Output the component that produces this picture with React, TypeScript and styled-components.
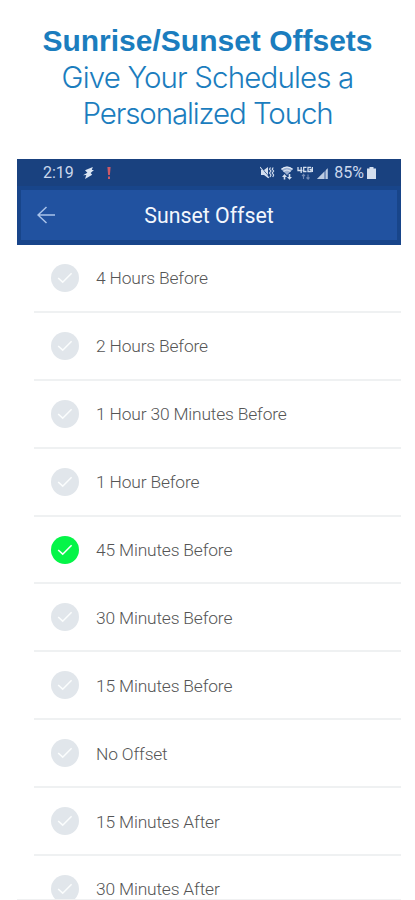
import React from "react";
import styled, { createGlobalStyle } from "styled-components";

const GlobalStyle = createGlobalStyle`
  * { box-sizing: border-box; }
  html, body { margin: 0; background: #fff; }
  body { overflow: hidden; }
`;

const Page = styled.main`
  width: 415px;
  height: 900px;
  overflow: hidden;
  display: flex;
  flex-direction: column;
  background: #fff;
  font-family: Roboto, sans-serif;
`;

const Headline = styled.header`
  height: 159px;
  flex: none;
  padding-top: 23px;
  color: #1b7dbe;
  text-align: center;
`;

const HeadLine = styled.div<{ $bold?: boolean; $track: number }>`
  height: 36px;
  line-height: 36px;
  white-space: nowrap;
  font-family: ${(p) => (p.$bold ? '"Liberation Sans", sans-serif' : "Inter, sans-serif")};
  font-size: ${(p) => (p.$bold ? 30 : 29.5)}px;
  font-weight: ${(p) => (p.$bold ? 700 : 300)};
  letter-spacing: ${(p) => p.$track}px;
`;

const Phone = styled.section`
  width: 384px;
  height: 741px;
  flex: none;
  margin-left: 17px;
  overflow: hidden;
  border-bottom: 1px solid #f0f1f2;
`;

const StatusBar = styled.div`
  height: 27px;
  display: flex;
  align-items: center;
  padding: 0 25px 0 26px;
  background: #19417f;
  color: #cbd8ec;
  font-size: 16px;
`;

const StatusText = styled.span<{ $gap?: number }>`
  margin-left: ${(p) => p.$gap ?? 0}px;
  white-space: nowrap;
`;

const StatusIcons = styled.div`
  display: flex;
  align-items: center;
  margin-left: auto;
`;

const Glyph = styled.svg<{ $gap?: number }>`
  display: block;
  flex: none;
  margin-left: ${(p) => p.$gap ?? 0}px;
`;

const TitleBar = styled.div`
  height: 59px;
  display: grid;
  grid-template-columns: 60px 1fr 60px;
  align-items: center;
  background: #2152a0;
  border: solid #18458a;
  border-width: 4px 4px 5px 4px;
  color: #f3f7fd;
`;

const Title = styled.h1`
  margin: 0;
  padding-top: 2px;
  text-align: center;
  font-size: 21.3px;
  font-weight: 400;
  line-height: 28px;
`;

const OptionList = styled.ul`
  list-style: none;
  margin: 0;
  padding: 0 0 0 17px;
`;

const Option = styled.li`
  height: 67.9px;
  display: flex;
  align-items: center;
  gap: 17px;
  padding-left: 17px;
  border-bottom: 2px solid #eff1f2;
  color: #555;
  font-size: 17.4px;
  font-weight: 300;
  letter-spacing: -0.17px;
`;

const Check = styled.span<{ $on: boolean }>`
  width: 28px;
  height: 28px;
  flex: none;
  display: grid;
  place-items: center;
  border-radius: 50%;
  background: ${(p) => (p.$on ? "#05f548" : "#e1e6eb")};
`;

const Label = styled.span`
  padding-top: 1px;
  white-space: nowrap;
`;

const options = [
  "4 Hours Before",
  "2 Hours Before",
  "1 Hour 30 Minutes Before",
  "1 Hour Before",
  "45 Minutes Before",
  "30 Minutes Before",
  "15 Minutes Before",
  "No Offset",
  "15 Minutes After",
  "30 Minutes After",
];

const selected = "45 Minutes Before";

export default function App() {
  return (
    <Page>
      <GlobalStyle />
      <Headline>
        <HeadLine $bold $track={0}>Sunrise/Sunset Offsets</HeadLine>
        <HeadLine $track={-0.85}>Give Your Schedules a</HeadLine>
        <HeadLine $track={-1.1}>Personalized Touch</HeadLine>
      </Headline>
      <Phone>
        <StatusBar>
          <StatusText>2:19</StatusText>
          <Glyph $gap={9} width="12" height="12" viewBox="0 0 12 12">
            <path d="M9.8 0 2 3.2 4.4 5.8 0 8.2l3.3-.1L2 12l7.2-4.2L7.6 5.9 11 3 8.8 3Z" fill="#dce6f4" />
          </Glyph>
          <Glyph $gap={12} width="4" height="12" viewBox="0 0 4 12">
            <path d="M.4 0h3.2L2.9 8H1.1ZM1 9.5h2V12H1Z" fill="#cd5966" />
          </Glyph>
          <StatusIcons>
            <Glyph width="15" height="13" viewBox="0 0 15 13">
              <path d="M1 4h3l4-3v11L4 9H1Z" fill="#d4dfef" />
              <path d="m1 1 8 10" stroke="#19417f" strokeWidth="1" />
              <path d="m0 1 9 11M10.5 1.5l-1 1.8 1.5 1.7-1.5 2 1.5 2-1 2M13.2 1.5l-1 1.8 1.5 1.7-1.5 2 1.5 2-1 2" fill="none" stroke="#d4dfef" strokeWidth="1.1" />
            </Glyph>
            <Glyph $gap={6} width="12" height="14" viewBox="0 0 12 14">
              <path d="M0 3Q6-2 12 3L6 9Z" fill="#9cb0d1" />
              <path d="M.5 3.2Q6-1 11.5 3.2M2.5 5.5Q6 2.5 9.5 5.5" fill="none" stroke="#e0e9f5" strokeWidth="1.2" />
              <path d="m1 11 2.5-3L6 11H4.3v2.5H2.7V11Zm5 0h1.7V8h1.6v3H11l-2.5 2.8Z" fill="#d4dfef" />
            </Glyph>
            <Glyph $gap={4} width="16" height="14" viewBox="0 0 16 14">
              <path d="M1 1v3.5h4.5M4.2 1v6M9.5 1.3H6.7v4.2h2.8M14 1.3h-3v4.2h3V3.4h-1.5M15.4 1v5" fill="none" stroke="#d4dfef" strokeWidth="1.3" />
              <path d="M6.5 13V8.5L5 10M6.5 8.5 8 10M11 8.5V13l-1.5-1.5M11 13l1.5-1.5" fill="none" stroke="#7189b5" strokeWidth="1.1" />
            </Glyph>
            <Glyph $gap={4} width="11" height="12" viewBox="0 0 11 12">
              <path d="M0 12 11 1v11Z" fill="#7892bd" />
              <path d="M0 12 7 5v7ZM9 3l1.5-1.5V12H9Z" fill="#bccbe1" />
            </Glyph>
            <StatusText $gap={6}>85%</StatusText>
            <Glyph $gap={3} width="9" height="12" viewBox="0 0 9 12">
              <path d="M2.5 0h4v1.5H9V12H0V1.5h2.5Z" fill="#d4dfef" />
            </Glyph>
          </StatusIcons>
        </StatusBar>
        <TitleBar>
          <Glyph $gap={16} width="19" height="18" viewBox="0 0 19 18">
            <path d="M9.5 1 1 9l8.5 8M1.2 9H18" fill="none" stroke="#a9c3ea" strokeWidth="1.5" />
          </Glyph>
          <Title>Sunset Offset</Title>
        </TitleBar>
        <OptionList>
          {options.map((name) => (
            <Option key={name}>
              <Check $on={name === selected}>
                <svg width="16" height="12" viewBox="0 0 16 12">
                  <path d="m1.2 6 4.5 4.2L14.6 1.3" fill="none" stroke="#fbfdfd" strokeWidth="1.6" />
                </svg>
              </Check>
              <Label>{name}</Label>
            </Option>
          ))}
        </OptionList>
      </Phone>
    </Page>
  );
}
